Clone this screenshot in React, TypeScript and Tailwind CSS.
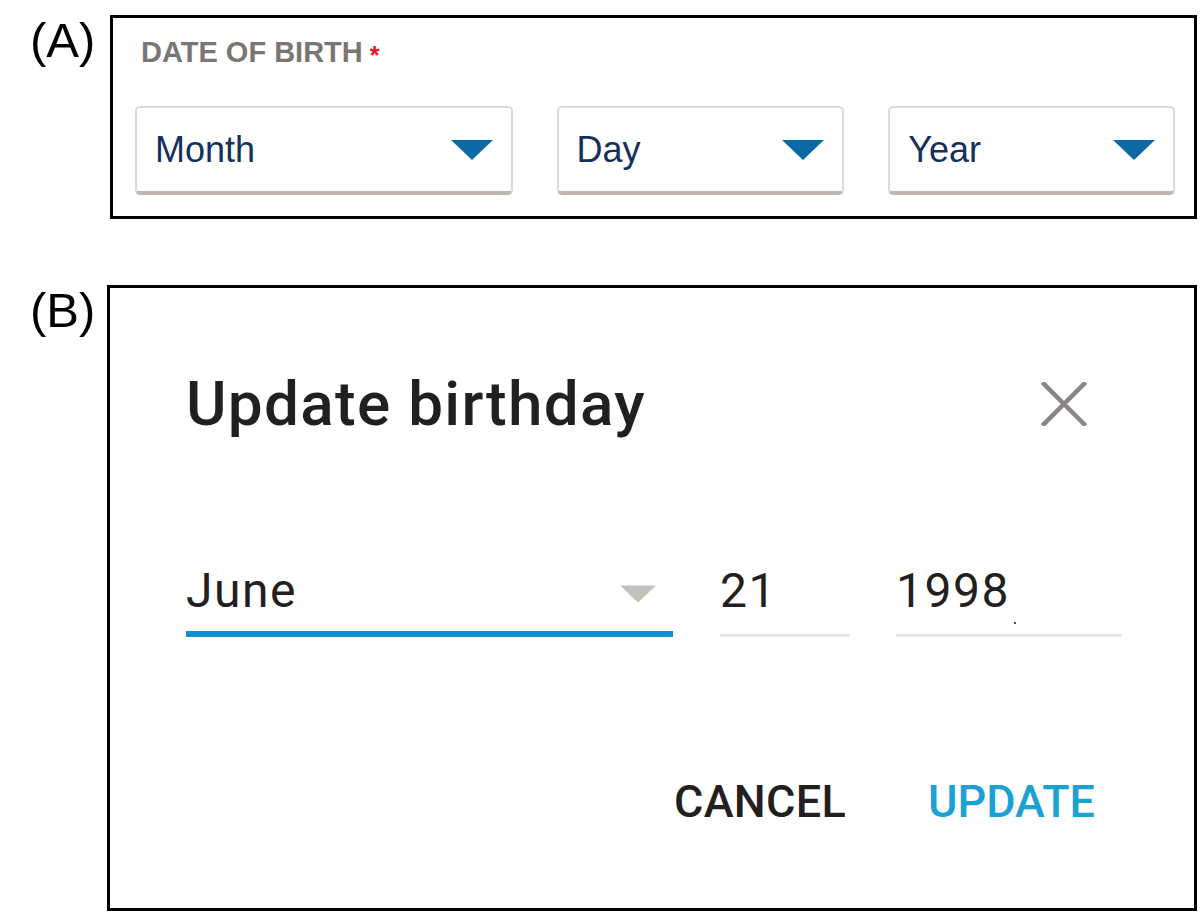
import React from "react";

const sans = { fontFamily: '"Liberation Sans", Arial, sans-serif' };
const roboto = { fontFamily: 'Roboto, "Noto Sans", sans-serif' };

function Caret({ className }: { className: string }) {
  return (
    <svg viewBox="0 0 42 20" className={className} aria-hidden="true">
      <polygon points="0,0 42,0 21,20" fill="currentColor" />
    </svg>
  );
}

function SelectBox({ label, width }: { label: string; width: string }) {
  return (
    <div
      className={`${width} h-[89px] flex items-center justify-between pl-[18px] pr-[18px] bg-white rounded-[5px] border-2 border-[#dddbd6] border-b-[4px] border-b-[#bdb9b2]`}
    >
      <span className="text-[36px] leading-none text-[#15305a]" style={sans}>
        {label}
      </span>
      <Caret className="w-[42px] h-[20px] text-[#0b6aa6]" />
    </div>
  );
}

function PanelLabel({ text, width }: { text: string; width: string }) {
  return (
    <div className={`${width} shrink-0 pt-px`}>
      <span className="text-[49px] leading-none text-black" style={sans}>
        {text}
      </span>
    </div>
  );
}

export default function App() {
  return (
    <div className="w-[1203px] h-[921px] bg-white pt-[15px] pl-[30px] flex flex-col gap-[66px]">
      {/* (A) date of birth selects */}
      <div className="flex items-start">
        <PanelLabel text="(A)" width="w-[80px]" />
        <div className="w-[1087px] h-[204px] border-[3px] border-black pt-[20px] pl-[22px] pr-[19px]">
          <div className="flex items-start gap-[7px] h-[29px] ml-[6px]" style={sans}>
            <span className="text-[29px] leading-none font-bold text-[#7b7674]">
              DATE OF BIRTH
            </span>
            <span className="text-[25px] leading-none font-bold text-[#e8141c] mt-[5px]">*</span>
          </div>
          <div className="flex gap-[44px] mt-[39px]">
            <SelectBox label="Month" width="w-[378px]" />
            <SelectBox label="Day" width="w-[288px]" />
            <SelectBox label="Year" width="w-[287px]" />
          </div>
        </div>
      </div>

      {/* (B) update birthday dialog */}
      <div className="flex items-start">
        <PanelLabel text="(B)" width="w-[77px]" />
        <div
          className="w-[1090px] h-[626px] border-[3px] border-black pt-[85px] pl-[76px] flex flex-col"
          style={roboto}
        >
          <div className="flex items-center justify-between pr-[107px]">
            <h1 className="text-[62px] leading-none font-medium text-[#221f20] tracking-[1.3px]">
              Update birthday
            </h1>
            <svg viewBox="0 0 46 44" className="w-[46px] h-[44px]" aria-hidden="true">
              <path
                d="M3 2 L43 42 M43 2 L3 42"
                stroke="#8b8684"
                strokeWidth="4.5"
                strokeLinecap="square"
                fill="none"
              />
            </svg>
          </div>

          <div className="flex items-end mt-[132px]">
            <div className="w-[487px] shrink-0 flex flex-col">
              <div className="flex items-center justify-between pr-[17px]">
                <span className="text-[48px] leading-none text-[#231f20] tracking-[1.5px]">June</span>
                <Caret className="w-[36px] h-[18px] text-[#c4c0ba] mt-[6px]" />
              </div>
              <div className="h-[6px] bg-[#0a91cd] mt-[16px]" />
            </div>
            <div className="w-[130px] shrink-0 flex flex-col ml-[47px]">
              <span className="text-[48px] leading-none text-[#231f20] tracking-[1.5px]">21</span>
              <div className="h-[3px] bg-[#e7e5e0] mt-[19px]" />
            </div>
            <div className="w-[226px] shrink-0 flex flex-col ml-[46px]">
              <div className="relative">
                <span className="text-[48px] leading-none text-[#231f20] tracking-[1.5px]">1998</span>
                <span className="absolute left-[118px] top-[55px] w-[2px] h-[2px] bg-[#555]" />
              </div>
              <div className="h-[3px] bg-[#e7e5e0] mt-[19px]" />
            </div>
          </div>

          <div className="flex justify-end items-center gap-[82px] mt-[142px] pr-[99px]">
            <button className="text-[45px] leading-none font-medium text-[#231f20] tracking-[0.3px]">CANCEL</button>
            <button className="text-[45px] leading-none font-medium text-[#1ba1d2]">UPDATE</button>
          </div>
        </div>
      </div>
    </div>
  );
}
